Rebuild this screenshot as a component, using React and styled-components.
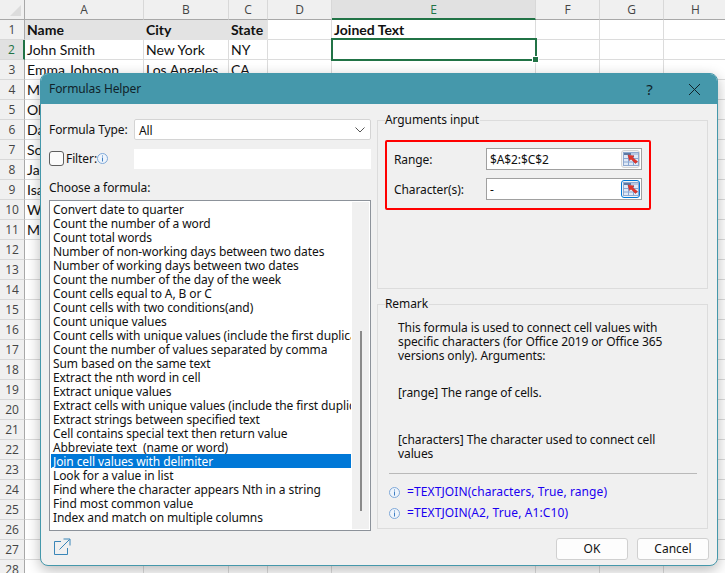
import React from "react";
import styled, { createGlobalStyle } from "styled-components";

const GlobalStyle = createGlobalStyle`
  html, body {
    margin: 0;
    padding: 0;
    background: #fff;
  }
`;

const Page = styled.div`
  position: relative;
  width: 725px;
  height: 573px;
  overflow: hidden;
`;

const Sheet = styled.div`
  display: grid;
  grid-template-columns: 25px 119px 85px 39px 64px 204px 64px 64px 64px;
  grid-auto-rows: 20px;
  font-family: "Lato", "Liberation Sans", sans-serif;
  font-size: 14px;
  color: #111;
`;

const Corner = styled.div`
  background: #f0f0f0;
  border-right: 1px solid #a8a8a8;
  border-bottom: 1px solid #a8a8a8;
  box-sizing: border-box;
  display: flex;
  justify-content: flex-end;
  align-items: flex-end;
  padding: 0 3px 3px 0;
  &::after {
    content: "";
    width: 0;
    height: 0;
    border-left: 11px solid transparent;
    border-bottom: 11px solid #dcdcdc;
  }
`;

const ColHead = styled.div`
  display: flex;
  align-items: center;
  justify-content: center;
  box-sizing: border-box;
  font-family: "Open Sans", "Liberation Sans", sans-serif;
  font-size: 12px;
  background: ${(p) => (p.$active ? "#e1e1e1" : "#f0f0f0")};
  color: ${(p) => (p.$active ? "#217346" : "#444")};
  border-right: 1px solid #d8d8d8;
  border-bottom: ${(p) => (p.$active ? "2px solid #217346" : "1px solid #a8a8a8")};
`;

const RowHead = styled.div`
  display: flex;
  align-items: center;
  justify-content: center;
  box-sizing: border-box;
  font-family: "Open Sans", "Liberation Sans", sans-serif;
  font-size: 12px;
  background: ${(p) => (p.$active ? "#e1e1e1" : "#f0f0f0")};
  color: ${(p) => (p.$active ? "#217346" : "#444")};
  border-bottom: 1px solid #d8d8d8;
  border-right: ${(p) => (p.$active ? "2px solid #217346" : "1px solid #a8a8a8")};
`;

const Cell = styled.div`
  position: relative;
  box-sizing: border-box;
  display: flex;
  align-items: center;
  padding-left: 2px;
  white-space: nowrap;
  overflow: hidden;
  border-right: 1px solid #dcdcdc;
  border-bottom: 1px solid #dcdcdc;
  background: ${(p) => (p.$head ? "#e3e3e3" : "#fff")};
  font-weight: ${(p) => (p.$bold ? 700 : 400)};
  ${(p) => p.$head && "border-color: #e3e3e3; border-right-color: #e3e3e3;"}
`;

const SelectedCell = styled.div`
  position: absolute;
  left: 331px;
  top: 38px;
  width: 206px;
  height: 23px;
  box-sizing: border-box;
  border: 2px solid #217346;
  &::after {
    content: "";
    position: absolute;
    right: -4px;
    bottom: -4px;
    width: 5px;
    height: 5px;
    background: #217346;
    border: 1px solid #fff;
  }
`;

const Dialog = styled.div`
  position: absolute;
  left: 40px;
  top: 73px;
  width: 678px;
  height: 493px;
  box-sizing: border-box;
  display: flex;
  flex-direction: column;
  background: #f0f0f0;
  border: 1px solid #4598ab;
  border-radius: 8px;
  overflow: hidden;
  box-shadow: 0 4px 14px rgba(0, 0, 0, 0.28);
  font-family: "Noto Sans", "Liberation Sans", sans-serif;
  font-size: 12px;
  line-height: 14px;
  letter-spacing: -0.1px;
  color: #111;
`;

const TitleBar = styled.div`
  height: 30px;
  flex: none;
  display: flex;
  align-items: center;
  padding-left: 8px;
  background: #4598ab;
  color: #10232a;
`;

const TitleText = styled.div`
  flex: 1;
`;

const TitleButton = styled.button`
  width: 45px;
  height: 30px;
  padding: 0;
  border: 0;
  background: none;
  color: #10232a;
  font: inherit;
  font-size: 15px;
  display: flex;
  align-items: center;
  justify-content: center;
`;

const Body = styled.div`
  flex: 1;
  display: grid;
  grid-template-columns: 322px 331px;
  column-gap: 6px;
  padding: 0 0 0 8px;
`;

const LeftColumn = styled.div`
  display: flex;
  flex-direction: column;
  padding-top: 15px;
`;

const TypeRow = styled.div`
  display: flex;
  align-items: center;
  height: 21px;
  justify-content: space-between;
`;

const FilterRow = styled(TypeRow)`
  margin-top: 8px;
  justify-content: flex-start;
`;

const SelectBox = styled.div`
  width: 237px;
  height: 21px;
  box-sizing: border-box;
  display: flex;
  align-items: center;
  justify-content: space-between;
  padding: 0 5px 0 4px;
  background: #fff;
  border: 1px solid #d4d4d4;
  border-radius: 2px;
`;

const SelectValue = styled.span`
  padding-top: 2px;
`;

const CheckBox = styled.div`
  width: 13px;
  height: 13px;
  border: 1px solid #5f5f5f;
  border-radius: 3px;
  background: #fbfbfb;
  margin-right: 2px;
  flex: none;
`;

const FilterInput = styled.div`
  width: 237px;
  height: 20px;
  margin-left: auto;
  background: #fff;
`;

const ChooseLabel = styled.div`
  margin-top: 12px;
  height: 14px;
`;

const FormulaList = styled.div`
  margin-top: 5px;
  height: 331px;
  box-sizing: border-box;
  display: flex;
  background: #fff;
  border: 1px solid #8c929a;
  padding: 1px;
`;

const ListRows = styled.div`
  width: 301px;
  overflow: hidden;
`;

const ListRow = styled.div`
  height: 14px;
  box-sizing: border-box;
  padding: 1px 0 0 2px;
  white-space: nowrap;
  background: ${(p) => (p.$selected ? "#0078d7" : "transparent")};
  color: ${(p) => (p.$selected ? "#fff" : "#111")};
`;

const ScrollTrack = styled.div`
  width: 17px;
  margin-left: 1px;
  background: #f0f0f0;
  display: flex;
  justify-content: center;
  align-items: flex-end;
  padding-bottom: 18px;
`;

const ScrollThumb = styled.div`
  width: 2px;
  height: 180px;
  background: #8a8a8a;
`;

const RightColumn = styled.div`
  display: flex;
  flex-direction: column;
`;

const Group = styled.fieldset`
  margin: 0;
  min-width: 0;
  box-sizing: border-box;
  border: 1px solid #dcdcdc;
  padding: 0;
  flex: none;
`;

const Legend = styled.legend`
  margin-left: 7px;
  padding: 0 1px 0 0;
  line-height: 14px;
`;

const ArgsGroup = styled(Group)`
  height: 176px;
  margin-top: 9px;
  padding-top: 13px;
`;

const RemarkGroup = styled(Group)`
  height: 232px;
  margin-top: 8px;
`;

const RedBox = styled.div`
  width: 266px;
  height: 70px;
  margin-left: 7px;
  box-sizing: border-box;
  border: 2px solid #ff0000;
  border-radius: 2px;
  padding: 6px 7px 0 7px;
  display: flex;
  flex-direction: column;
  gap: 8px;
`;

const ArgRow = styled.div`
  display: flex;
  align-items: center;
  justify-content: space-between;
`;

const ArgLabel = styled.span`
  padding-top: 2px;
`;

const ArgInput = styled.div`
  width: 156px;
  height: 22px;
  box-sizing: border-box;
  display: flex;
  align-items: center;
  justify-content: space-between;
  padding: 0 1px 0 3px;
  background: #fff;
  border: 1px solid #a0a0a0;
`;

const RangeButton = styled.div`
  width: 19px;
  height: 18px;
  box-sizing: border-box;
  display: flex;
  align-items: center;
  justify-content: center;
  background: #f4f4f4;
  border-radius: 3px;
  border: ${(p) => (p.$focus ? "1px solid #0078d7" : "1px solid #d4d4d4")};
`;

const RemarkText = styled.div`
  height: 162px;
  box-sizing: border-box;
  padding: 10px 22px 0 20px;
`;

const Para = styled.p`
  margin: ${(p) => p.$gap}px 0 0;
`;

const Divider = styled.div`
  height: 1px;
  background: #b9b9b9;
  margin: 0 10px 0 11px;
`;

const Examples = styled.div`
  padding: 11px 0 0 11px;
  display: flex;
  flex-direction: column;
  gap: 7px;
`;

const Example = styled.div`
  display: flex;
  align-items: center;
  gap: 7px;
  color: #1a00f0;
  letter-spacing: 0.1px;
`;

const Footer = styled.div`
  height: 35px;
  flex: none;
  display: flex;
  align-items: flex-start;
  justify-content: space-between;
  padding: 7px 8px 0 12px;
`;

const FooterButtons = styled.div`
  display: flex;
  gap: 9px;
`;

const DialogButton = styled.button`
  width: 72px;
  height: 22px;
  padding: 0;
  box-sizing: border-box;
  background: #fdfdfd;
  border: 1px solid #d0d0d0;
  border-radius: 3px;
  font: inherit;
  color: #111;
`;

const InfoIcon = ({ size = 11 }) => (
  <svg width={size} height={size} viewBox="0 0 11 11" style={{ flex: "none" }}>
    <circle cx="5.5" cy="5.5" r="5" fill="#eef4fb" stroke="#7fa8d8" />
    <rect x="5" y="2.5" width="1" height="1" fill="#3f7fc4" />
    <rect x="5" y="4.5" width="1" height="4" fill="#3f7fc4" />
  </svg>
);

const RangeIcon = () => (
  <svg width="16" height="14" viewBox="0 0 16 14">
    <rect x="0.5" y="0.5" width="15" height="13" fill="#dfe9f7" stroke="#8fa9d0" />
    <rect x="1" y="1" width="7" height="2" fill="#5f7aa3" />
    <rect x="8" y="1" width="7" height="2" fill="#b7c9e3" />
    <path d="M0.5 6.5H15.5M0.5 10H15.5M5.5 3V13.5M10.5 3V13.5" stroke="#8aa5cf" fill="none" />
    <path d="M5 3L11 4L9.6 5.6L14.5 9.5L12.5 11.5L8 7L6.5 8.5Z" fill="#e0352b" stroke="#c0261e" strokeWidth="0.5" />
  </svg>
);

const Chevron = () => (
  <svg width="10" height="6" viewBox="0 0 10 6">
    <path d="M0.5 0.5L5 5L9.5 0.5" fill="none" stroke="#555" />
  </svg>
);

const ShareIcon = () => (
  <svg width="18" height="18" viewBox="0 0 18 18" fill="none" stroke="#3a86b8">
    <path d="M8 3.5H1.5V16.5H14.5V10" />
    <path d="M6.5 11.5L16.5 1.5M10.5 1H17V7.5" />
  </svg>
);

const columns = ["A", "B", "C", "D", "E", "F", "G", "H"];

const people = [
  ["Name", "City", "State", "", "Joined Text"],
  ["John Smith", "New York", "NY"],
  ["Emma Johnson", "Los Angeles", "CA"],
  ["M"],
  ["Ol"],
  ["Da"],
  ["So"],
  ["Ja"],
  ["Isa"],
  ["W"],
  ["M"],
];

const formulas = [
  "Convert date to quarter",
  "Count the number of a word",
  "Count total words",
  "Number of non-working days between two dates",
  "Number of working days between two dates",
  "Count the number of the day of the week",
  "Count cells equal to A, B or C",
  "Count cells with two conditions(and)",
  "Count unique values",
  "Count cells with unique values (include the first duplica",
  "Count the number of values separated by comma",
  "Sum based on the same text",
  "Extract the nth word in cell",
  "Extract unique values",
  "Extract cells with unique values (include the first duplic",
  "Extract strings between specified text",
  "Cell contains special text then return value",
  "Abbreviate text\u00a0 (name or word)",
  "Join cell values with delimiter",
  "Look for a value in list",
  "Find where the character appears Nth in a string",
  "Find most common value",
  "Index and match on multiple columns",
];

const rowCount = 28;

const App = () => (
  <Page>
    <GlobalStyle />
    <Sheet>
      <Corner />
      {columns.map((c) => (
        <ColHead key={c} $active={c === "E"}>
          {c}
        </ColHead>
      ))}
      {Array.from({ length: rowCount }, (_, r) => (
        <React.Fragment key={r}>
          <RowHead $active={r === 1}>{r + 1}</RowHead>
          {columns.map((c, i) => {
            const text = (people[r] && people[r][i]) || "";
            return (
              <Cell key={c} $bold={r === 0} $head={r === 0 && i < 3}>
                {text}
              </Cell>
            );
          })}
        </React.Fragment>
      ))}
    </Sheet>
    <SelectedCell />
    <Dialog>
      <TitleBar>
        <TitleText>Formulas Helper</TitleText>
        <TitleButton>?</TitleButton>
        <TitleButton>
          <svg width="13" height="13" viewBox="0 0 13 13">
            <path d="M1 1L12 12M12 1L1 12" stroke="#10232a" fill="none" />
          </svg>
        </TitleButton>
      </TitleBar>
      <Body>
        <LeftColumn>
          <TypeRow>
            <span>Formula Type:</span>
            <SelectBox>
              <SelectValue>All</SelectValue>
              <Chevron />
            </SelectBox>
          </TypeRow>
          <FilterRow>
            <CheckBox />
            <span>Filter:</span>
            <InfoIcon />
            <FilterInput />
          </FilterRow>
          <ChooseLabel>Choose a formula:</ChooseLabel>
          <FormulaList>
            <ListRows>
              {formulas.map((f) => (
                <ListRow key={f} $selected={f === "Join cell values with delimiter"}>
                  {f}
                </ListRow>
              ))}
            </ListRows>
            <ScrollTrack>
              <ScrollThumb />
            </ScrollTrack>
          </FormulaList>
        </LeftColumn>
        <RightColumn>
          <ArgsGroup>
            <Legend>Arguments input</Legend>
            <RedBox>
              <ArgRow>
                <ArgLabel>Range:</ArgLabel>
                <ArgInput>
                  <ArgLabel>$A$2:$C$2</ArgLabel>
                  <RangeButton>
                    <RangeIcon />
                  </RangeButton>
                </ArgInput>
              </ArgRow>
              <ArgRow>
                <ArgLabel>Character(s):</ArgLabel>
                <ArgInput>
                  <ArgLabel>-</ArgLabel>
                  <RangeButton $focus>
                    <RangeIcon />
                  </RangeButton>
                </ArgInput>
              </ArgRow>
            </RedBox>
          </ArgsGroup>
          <RemarkGroup>
            <Legend>Remark</Legend>
            <RemarkText>
              <Para $gap={0}>
                This formula is used to connect cell values with specific characters (for Office 2019 or
                Office 365 versions only). Arguments:
              </Para>
              <Para $gap={23}>[range] The range of cells.</Para>
              <Para $gap={33}>[characters] The character used to connect cell values</Para>
            </RemarkText>
            <Divider />
            <Examples>
              <Example>
                <InfoIcon />
                =TEXTJOIN(characters, True, range)
              </Example>
              <Example>
                <InfoIcon />
                =TEXTJOIN(A2, True, A1:C10)
              </Example>
            </Examples>
          </RemarkGroup>
        </RightColumn>
      </Body>
      <Footer>
        <ShareIcon />
        <FooterButtons>
          <DialogButton>OK</DialogButton>
          <DialogButton>Cancel</DialogButton>
        </FooterButtons>
      </Footer>
    </Dialog>
  </Page>
);

export default App;
